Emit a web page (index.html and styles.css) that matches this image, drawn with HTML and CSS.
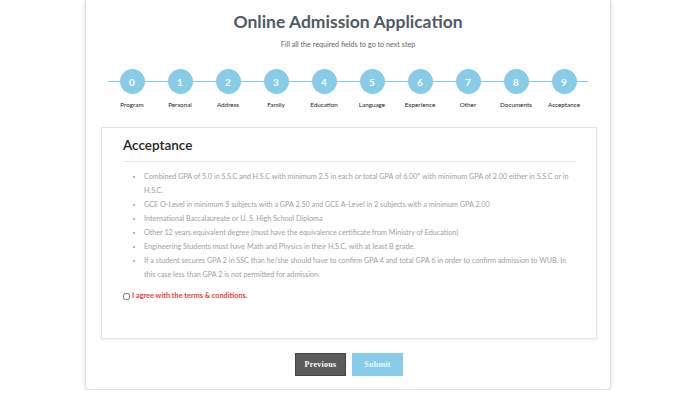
FILE: index.html
```html
<!DOCTYPE html>
<html lang="en">
<head>
  <meta charset="UTF-8">
  <title>Online Admission Application</title>
  <link rel="stylesheet" href="styles.css">
</head>
<body>

  <div class="card">
    <h1>Online Admission Application</h1>
    <p class="subtitle">Fill all the required fields to go to next step</p>

    <!-- Step progress -->
    <ol class="steps">
      <li><span class="dot">0</span><span class="label">Program</span></li>
      <li><span class="dot">1</span><span class="label">Personal</span></li>
      <li><span class="dot">2</span><span class="label">Address</span></li>
      <li><span class="dot">3</span><span class="label">Family</span></li>
      <li><span class="dot">4</span><span class="label">Education</span></li>
      <li><span class="dot">5</span><span class="label">Language</span></li>
      <li><span class="dot">6</span><span class="label">Experience</span></li>
      <li><span class="dot">7</span><span class="label">Other</span></li>
      <li><span class="dot">8</span><span class="label">Documents</span></li>
      <li><span class="dot">9</span><span class="label">Acceptance</span></li>
    </ol>

    <!-- Acceptance panel -->
    <div class="panel">
      <h2>Acceptance</h2>
      <ul class="rules">
        <li>Combined GPA of 5.0 in S.S.C and H.S.C with minimum 2.5 in each or total GPA of 6.00* with minimum GPA of 2.00 either in S.S.C or in H.S.C.</li>
        <li>GCE O-Level in minimum 5 subjects with a GPA 2.50 and GCE A-Level in 2 subjects with a minimum GPA 2.00</li>
        <li>International Baccalaureate or U. S. High School Diploma</li>
        <li>Other 12 years equivalent degree (must have the equivalence certificate from Ministry of Education)</li>
        <li>Engineering Students must have Math and Physics in their H.S.C. with at least B grade.</li>
        <li>If a student secures GPA 2 in SSC than he/she should have to confirm GPA 4 and total GPA 6 in order to confirm admission to WUB. In this case less than GPA 2 is not permitted for admission.</li>
      </ul>
      <label class="agree"><input type="checkbox"> I agree with the terms &amp; conditions.</label>
    </div>

    <div class="actions">
      <button class="btn prev">Previous</button>
      <button class="btn submit">Submit</button>
    </div>
  </div>

</body>
</html>
```

FILE: styles.css
```css
body {
  margin: 0;
  background: #fff;
  font-family: "Lato", "Open Sans", Arial, sans-serif;
}

.card {
  width: 526px;
  height: 390px;
  margin: 0 0 0 85px;
  border: 1px solid #e2e2e2;
  border-top: none;
  border-radius: 0 0 5px 5px;
  box-shadow: 0 1px 4px rgba(0,0,0,0.15);
  box-sizing: border-box;
  background: #fff;
  padding-top: 10px;
}

h1 {
  margin: 0;
  text-align: center;
  font-size: 17.5px;
  line-height: 24px;
  font-weight: 700;
  color: #505a64;
}

.subtitle {
  margin: 5px 0 0;
  text-align: center;
  font-size: 7.2px;
  line-height: 12px;
  color: #666;
}

/* Steps */
.steps {
  position: relative;
  list-style: none;
  margin: 18px auto 0;
  padding: 0;
  width: 480px;
  display: grid;
  grid-template-columns: repeat(10, 1fr);
}

.steps::before {
  content: "";
  position: absolute;
  left: 0;
  right: 0;
  top: 12px;
  height: 1px;
  background: #84cbe8;
}

.steps li {
  position: relative;
  display: flex;
  flex-direction: column;
  align-items: center;
}

.dot {
  width: 25px;
  height: 25px;
  border-radius: 50%;
  background: #87cdea;
  color: #fff;
  font-size: 10px;
  font-weight: 700;
  display: flex;
  align-items: center;
  justify-content: center;
}

.label {
  margin-top: 6px;
  font-size: 6.3px;
  line-height: 10px;
  color: #222;
  white-space: nowrap;
}

/* Panel */
.panel {
  margin: 17px 13px 0 15px;
  height: 212px;
  box-sizing: border-box;
  border: 1px solid #e4e4e4;
  box-shadow: 0 1px 3px rgba(0,0,0,0.08);
  padding: 7px 20px 0 21px;
}

.panel h2 {
  margin: 0;
  font-size: 13.5px;
  line-height: 20px;
  font-weight: 600;
  color: #222;
  padding-bottom: 6px;
  border-bottom: 1px solid #e8e8e8;
}

.rules {
  margin: 8px 0 0;
  padding-left: 21px;
  font-size: 7.2px;
  line-height: 14px;
  color: #a0a0a0;
}

.agree {
  display: flex;
  align-items: center;
  margin-top: 7px;
  font-size: 7.3px;
  line-height: 14px;
  font-weight: 700;
  color: #e8403a;
}

.agree input {
  width: 7px;
  height: 7px;
  margin: 0 2px 0 0;
}

/* Buttons */
.actions {
  margin-top: 14px;
  display: flex;
  justify-content: center;
  gap: 6px;
  padding-left: 2px;
}

.btn {
  width: 51px;
  height: 23px;
  border: none;
  font-family: "Liberation Serif", serif;
  font-weight: 700;
  font-size: 8px;
  color: #fff;
  cursor: pointer;
  letter-spacing: 0.3px;
}

.prev {
  background: #5b5b5b;
  border: 1px solid #444;
}

.submit {
  background: #87cdea;
  color: #eaf7fd;
}
```
